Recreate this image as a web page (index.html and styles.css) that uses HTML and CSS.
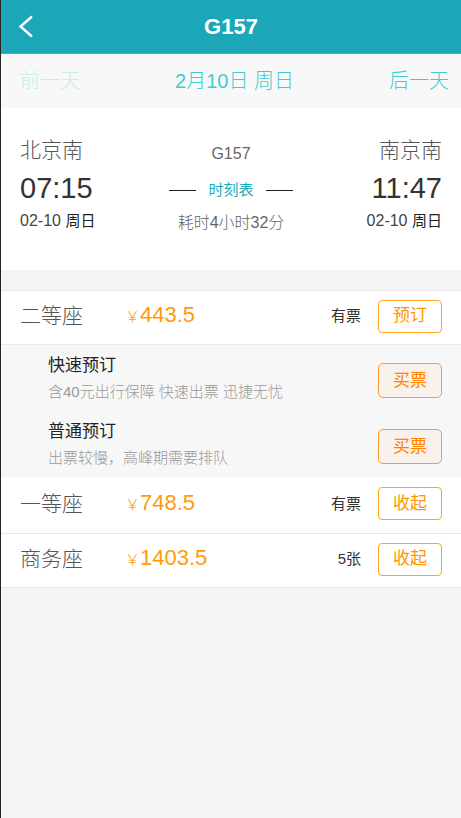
FILE: index.html
```html
<!DOCTYPE html>
<html lang="zh-CN">
<head>
<meta charset="utf-8">
<meta name="viewport" content="width=device-width, initial-scale=1">
<title>G157</title>
<link rel="stylesheet" href="styles.css">
</head>
<body>
<header class="topbar">
  <button class="back" type="button" aria-label="返回">
    <svg width="16" height="24" viewBox="0 0 16 24" fill="none" stroke="#fff" stroke-width="2.4"><path d="M14 1.5 2.5 11.5 14 21.5"/></svg>
  </button>
  <h1 class="title">G157</h1>
</header>
<nav class="days">
  <a class="day day-off" href="#">前一天</a>
  <span class="day day-now">2月10日 周日</span>
  <a class="day day-next" href="#">后一天</a>
</nav>
<main>
  <section class="trip">
    <div class="stop">
      <span class="station">北京南</span>
      <span class="time">07:15</span>
      <span class="date">02-10 <span class="weekday">周日</span></span>
    </div>
    <div class="middle">
      <span class="train">G157</span>
      <a class="timetable" href="#">时刻表</a>
      <span class="duration">耗时4小时32分</span>
    </div>
    <div class="stop stop-end">
      <span class="station">南京南</span>
      <span class="time">11:47</span>
      <span class="date">02-10 <span class="weekday">周日</span></span>
    </div>
  </section>
  <section class="seats">
    <div class="seat">
      <span class="seat-name">二等座</span>
      <span class="price"><span class="yen">￥</span>443.5</span>
      <span class="stock">有票</span>
      <button class="btn" type="button">预订</button>
    </div>
    <div class="offers">
      <div class="offer">
        <div class="offer-text">
          <span class="offer-name">快速预订</span>
          <span class="offer-note">含40元出行保障 快速出票 迅捷无忧</span>
        </div>
        <button class="btn btn-buy" type="button">买票</button>
      </div>
      <div class="offer">
        <div class="offer-text">
          <span class="offer-name">普通预订</span>
          <span class="offer-note">出票较慢，高峰期需要排队</span>
        </div>
        <button class="btn btn-buy" type="button">买票</button>
      </div>
    </div>
    <div class="seat seat-tall">
      <span class="seat-name">一等座</span>
      <span class="price"><span class="yen">￥</span>748.5</span>
      <span class="stock">有票</span>
      <button class="btn" type="button">收起</button>
    </div>
    <div class="seat">
      <span class="seat-name">商务座</span>
      <span class="price"><span class="yen">￥</span>1403.5</span>
      <span class="stock">5张</span>
      <button class="btn" type="button">收起</button>
    </div>
  </section>
</main>
</body>
</html>
```
FILE: styles.css
```css
* {
  box-sizing: border-box;
}

body {
  margin: 0;
  min-height: 100vh;
  border-left: 1px solid #252527;
  background: #f4f4f4;
  color: #333;
  font-family: "Liberation Sans", "Noto Sans CJK SC", sans-serif;
  font-size: 16px;
}

a {
  text-decoration: none;
}

button {
  padding: 0;
  font: inherit;
}

.topbar {
  display: grid;
  grid-template-columns: 48px 1fr 48px;
  align-items: center;
  height: 54px;
  border-bottom: 1px solid #3cb3c2;
  background: #1ca7b9;
}

.back {
  display: flex;
  padding-left: 17px;
  border: 0;
  background: none;
}

.title {
  margin: 0;
  color: #fff;
  font-size: 22px;
  font-weight: 700;
  text-align: center;
}

.days {
  display: grid;
  grid-template-columns: 1fr auto 1fr;
  align-items: center;
  height: 54px;
  padding: 0 12px 0 19px;
  background: #f8f8f8;
}

.day {
  color: #3ecdcd;
  font-size: 20px;
  font-weight: 300;
  line-height: 28px;
}

.day-off {
  color: #c3efec;
}

.day-next {
  text-align: right;
}

.trip {
  display: flex;
  justify-content: space-between;
  padding: 24px 19px 36px;
  background: #fff;
}

.stop {
  display: flex;
  flex-direction: column;
}

.stop-end {
  align-items: flex-end;
}

.station {
  color: #555;
  font-size: 21px;
  font-weight: 300;
  line-height: 36px;
}

.time {
  font-size: 29px;
  line-height: 40px;
}

.date {
  color: #444;
  line-height: 26px;
}

.weekday {
  color: #222;
  font-size: 15px;
}

.middle {
  display: flex;
  flex-direction: column;
  align-items: center;
  padding-top: 8px;
  color: #666;
}

.train {
  line-height: 28px;
}

.timetable {
  display: flex;
  align-items: center;
  gap: 12px;
  color: #1ca7b9;
  font-size: 15px;
  line-height: 44px;
}

.timetable::before,
.timetable::after {
  content: "";
  width: 27px;
  height: 1px;
  background: #222;
}

.duration {
  font-weight: 300;
  line-height: 22px;
}

.seats {
  margin-top: 20px;
  border-top: 1px solid #e8e8e8;
}

.seat {
  display: grid;
  grid-template-columns: 105px 1fr auto 64px;
  align-items: center;
  height: 54px;
  padding: 0 19px 3px;
  border-bottom: 1px solid #e8e8e8;
  background: #fff;
}

.seat-tall {
  height: 57px;
}

.seat-name {
  color: #555;
  font-size: 21px;
  font-weight: 300;
  line-height: 24px;
}

.price {
  color: #ff9a0c;
  font-size: 22px;
  line-height: 24px;
}

.yen {
  font-size: 15px;
  font-weight: 300;
}

.stock {
  margin-right: 17px;
  font-size: 15px;
  line-height: 24px;
}

.btn {
  width: 64px;
  height: 33px;
  border: 1px solid #ffa41c;
  border-radius: 4px;
  background: #fff;
  color: #ff9500;
  font-size: 17px;
  line-height: 28px;
}

.btn-buy {
  height: 35px;
  border-color: #ff9838;
  border-radius: 5px;
  background: #f8f1ec;
  color: #ff8200;
}

.offers {
  background: #f7f7f7;
}

.offer {
  display: flex;
  align-items: center;
  justify-content: space-between;
  height: 66px;
  padding: 5px 19px 0 47px;
}

.offer-text {
  display: flex;
  flex-direction: column;
  padding-bottom: 4px;
}

.offer-name {
  color: #222;
  font-size: 17px;
  line-height: 26px;
}

.offer-note {
  color: #999;
  font-size: 15px;
  font-weight: 300;
  line-height: 25px;
}
```
